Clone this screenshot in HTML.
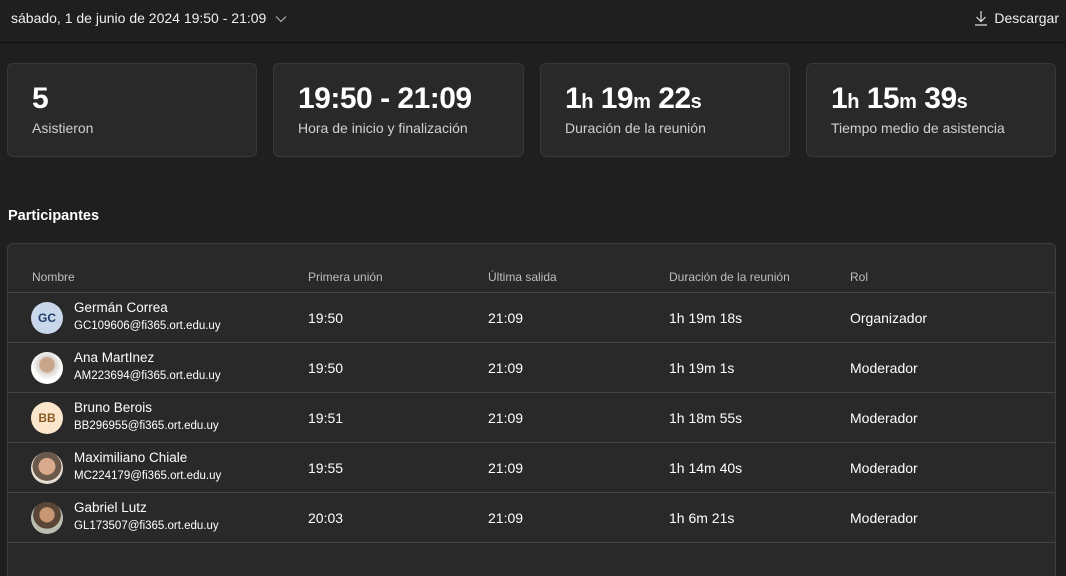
<!DOCTYPE html>
<html><head><meta charset="utf-8"><style>
*{box-sizing:border-box;margin:0;padding:0}
html,body{width:1066px;height:576px;overflow:hidden}
body{background:#1f1f1f;color:#fff;font-family:"Segoe UI","Liberation Sans",sans-serif;position:relative}
.top{position:absolute;left:0;top:0;width:1066px;height:43px;border-bottom:1px solid #0e0e0e}
.date{position:absolute;left:11px;top:10px;font-size:14px;color:#f0f0f0}
.dl{position:absolute;right:7px;top:10px;font-size:14px;color:#f0f0f0}
.card{position:absolute;top:63px;height:94px;background:#292929;border:1px solid #383838;border-radius:6px}
.card .v{position:absolute;left:24px;top:18px;font-size:30px;font-weight:bold;letter-spacing:-0.5px}
.card .v small{font-size:20px}
.card .l{position:absolute;left:24px;top:56px;font-size:14px;color:#d0d0d0}
h2{position:absolute;left:8px;top:208px;font-size:14.5px;font-weight:bold}
.tbl{position:absolute;left:7px;top:243px;width:1049px;height:345px;background:#292929;border:1px solid #3d3d3d;border-radius:6px}
.th{position:absolute;top:26px;font-size:12px;color:#bdbdbd}
.row{position:absolute;left:0;width:1047px;height:50px;border-top:1px solid #444}
.c{position:absolute;top:17px;font-size:14px}
.av{position:absolute;left:23px;top:9px;width:32px;height:32px;border-radius:50%;font-size:12px;font-weight:bold;display:flex;align-items:center;justify-content:center}
.nm{position:absolute;left:66px;top:7px;font-size:13.5px}
.em{position:absolute;left:66px;top:27px;font-size:11.5px}
</style></head><body>
<div class="top"><div class="date">sábado, 1 de junio de 2024 19:50 - 21:09 <svg width="12" height="8" style="margin-left:5px" viewBox="0 0 12 8"><path d="M1 1.5l5 5 5-5" fill="none" stroke="#bbb" stroke-width="1"/></svg></div>
<div class="dl"><svg width="14" height="16" viewBox="0 0 14 16" style="vertical-align:-3px;margin-right:6px"><path d="M7 1v10M2.5 7l4.5 4.5L11.5 7M1 15h12" fill="none" stroke="#ddd" stroke-width="1.2"/></svg>Descargar</div></div>
<div class="card" style="left:7px;width:250px"><div class="v">5</div><div class="l">Asistieron</div></div>
<div class="card" style="left:273px;width:251px"><div class="v">19:50 - 21:09</div><div class="l">Hora de inicio y finalización</div></div>
<div class="card" style="left:540px;width:250px"><div class="v">1<small>h</small> 19<small>m</small> 22<small>s</small></div><div class="l">Duración de la reunión</div></div>
<div class="card" style="left:806px;width:250px"><div class="v">1<small>h</small> 15<small>m</small> 39<small>s</small></div><div class="l">Tiempo medio de asistencia</div></div>
<h2>Participantes</h2>
<div class="tbl">
<div class="th" style="left:24px">Nombre</div><div class="th" style="left:300px">Primera unión</div><div class="th" style="left:480px">Última salida</div><div class="th" style="left:661px">Duración de la reunión</div><div class="th" style="left:842px">Rol</div>

<div class="row" style="top:48px"><div class="av" style="background:#c9d7ea;color:#1f3c6b">GC</div><div class="nm">Germán Correa</div><div class="em">GC109606@fi365.ort.edu.uy</div><div class="c" style="left:300px">19:50</div><div class="c" style="left:480px">21:09</div><div class="c" style="left:661px">1h 19m 18s</div><div class="c" style="left:842px">Organizador</div></div>
<div class="row" style="top:98px"><div class="av" style="background:radial-gradient(circle at 50% 40%,#c9a58a 0 30%,#d8d2cc 31%,#fff 60%)"></div><div class="nm">Ana MartInez</div><div class="em">AM223694@fi365.ort.edu.uy</div><div class="c" style="left:300px">19:50</div><div class="c" style="left:480px">21:09</div><div class="c" style="left:661px">1h 19m 1s</div><div class="c" style="left:842px">Moderador</div></div>
<div class="row" style="top:148px"><div class="av" style="background:#fbe6cc;color:#8a5a25">BB</div><div class="nm">Bruno Berois</div><div class="em">BB296955@fi365.ort.edu.uy</div><div class="c" style="left:300px">19:51</div><div class="c" style="left:480px">21:09</div><div class="c" style="left:661px">1h 18m 55s</div><div class="c" style="left:842px">Moderador</div></div>
<div class="row" style="top:198px"><div class="av" style="background:radial-gradient(circle at 50% 45%,#d9a98c 0 35%,#6b5a4c 36% 60%,#e8ddd2 61%)"></div><div class="nm">Maximiliano Chiale</div><div class="em">MC224179@fi365.ort.edu.uy</div><div class="c" style="left:300px">19:55</div><div class="c" style="left:480px">21:09</div><div class="c" style="left:661px">1h 14m 40s</div><div class="c" style="left:842px">Moderador</div></div>
<div class="row" style="top:248px"><div class="av" style="background:radial-gradient(circle at 50% 40%,#c99673 0 30%,#5a4636 31% 55%,#b9bfae 56%)"></div><div class="nm">Gabriel Lutz</div><div class="em">GL173507@fi365.ort.edu.uy</div><div class="c" style="left:300px">20:03</div><div class="c" style="left:480px">21:09</div><div class="c" style="left:661px">1h 6m 21s</div><div class="c" style="left:842px">Moderador</div></div>
<div class="row" style="top:298px"></div>
</div>
</body></html>
